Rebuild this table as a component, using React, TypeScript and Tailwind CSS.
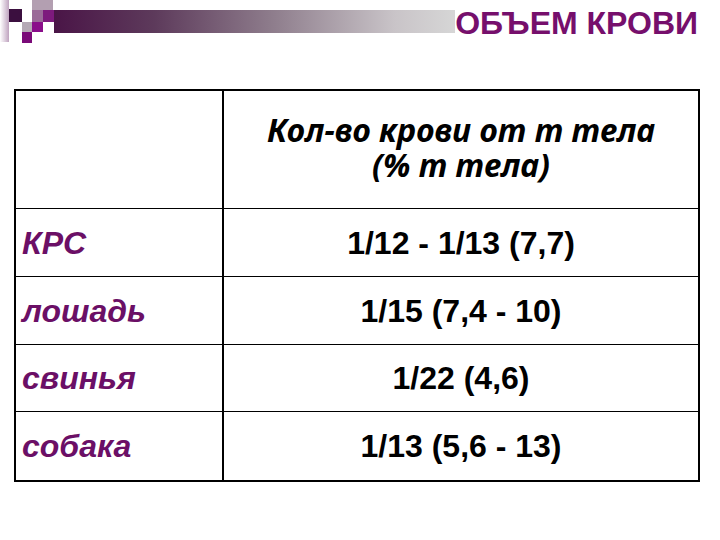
const ROWS = [
  { animal: "КРС", value: "1/12 - 1/13 (7,7)", h: "h-[68px]" },
  { animal: "лошадь", value: "1/15 (7,4 - 10)", h: "h-[68px]" },
  { animal: "свинья", value: "1/22 (4,6)", h: "h-[67px]" },
  { animal: "собака", value: "1/13 (5,6 - 13)", h: "h-[69px]" },
];

function Logo() {
  return (
    <svg width="54" height="44" viewBox="0 0 54 44" className="shrink-0">
      <defs>
        <linearGradient id="strip" x1="0" x2="1" y1="0" y2="0">
          <stop offset="0" stopColor="#ffffff" />
          <stop offset="1" stopColor="#bfa3bf" />
        </linearGradient>
      </defs>
      <rect x="0" y="0" width="9" height="42" fill="url(#strip)" />
      <rect x="9" y="9" width="13" height="13" fill="#3b0f3f" />
      <rect x="32" y="0" width="21" height="10" fill="#b39fb1" />
      <rect x="32" y="10" width="11" height="12" fill="#9b6a99" />
      <rect x="43" y="10" width="11" height="12" fill="#7d1a7d" />
      <rect x="22" y="22" width="10" height="10" fill="#b5a9b5" />
      <rect x="32" y="22" width="11" height="10" fill="#8a0d8a" />
      <rect x="22" y="32" width="10" height="11" fill="#7a0a78" />
    </svg>
  );
}

export default function App() {
  return (
    <div className="relative h-[540px] w-[720px] overflow-hidden bg-white font-['Liberation_Sans',Arial,sans-serif]">
      {/* top banner */}
      <div className="flex h-[89px] items-start">
        <Logo />
        <div className="mt-[10px] h-[23px] w-[401px] bg-[linear-gradient(to_right,#4a1547,#5d3a5b_25%,#8f7e8d_55%,#c9c4c8_85%,#d6d6d6)]" />
        <h1 className="ml-auto mr-[22px] mt-[5px] text-[32px] font-bold leading-[36px] text-[#760f6c]">
          ОБЪЕМ КРОВИ
        </h1>
      </div>

      {/* table */}
      <div className="ml-[14px] w-[686px] border-2 border-black">
        <div className="grid h-[117px] grid-cols-[208px_1fr]">
          <div className="border-r-2 border-black" />
          <div className="flex flex-col items-center justify-center pb-[6px] font-['Noto_Sans',sans-serif] text-[32px] font-bold italic leading-[35px] text-black">
            <span>Кол-во крови от т тела</span>
            <span>(% т тела)</span>
          </div>
        </div>
        {ROWS.map((r) => (
          <div key={r.animal} className={`grid grid-cols-[208px_1fr] border-t border-black ${r.h}`}>
            <div className="flex items-center border-r-2 border-black pl-[6px] text-[32px] font-bold italic text-[#6b0f66]">
              {r.animal}
            </div>
            <div className="flex items-center justify-center text-[32px] font-bold text-black">
              {r.value}
            </div>
          </div>
        ))}
      </div>
    </div>
  );
}
